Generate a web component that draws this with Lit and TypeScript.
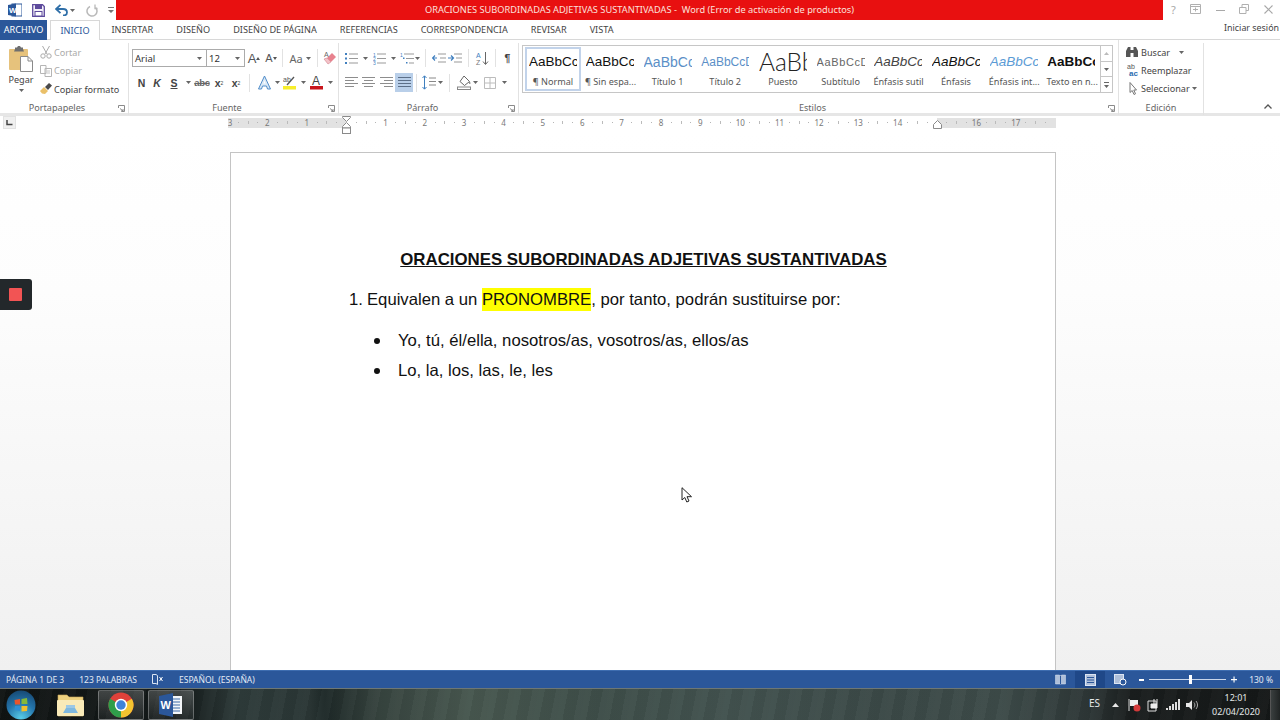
import { LitElement, html, svg, css } from "lit";
import { customElement } from "lit/decorators.js";

const caret = html`<svg class="caret" width="5" height="3" viewBox="0 0 5 3"><path d="M0 0h5L2.5 3z" fill="#666"/></svg>`;

// ribbon launcher in the corner of each group
const launcher = html`<svg class="launcher" width="7" height="7" viewBox="0 0 7 7"><path d="M.5 3V.5H6.5V6.5H3.5M2 3.5 5 6M5 4V6H3" fill="none" stroke="#8a8a8a"/></svg>`;

const lines = (rows: number[][], color = "#8d8d8d") =>
    svg`${rows.map(([x1, x2], i) => svg`<rect x=${x1} y=${1 + i * 3} width=${x2 - x1} height="1" fill=${color}/>`)}`;

const alignIcon = (rows: number[][], color?: string) =>
    html`<svg width="13" height="13" viewBox="0 0 13 13">${lines(rows, color)}</svg>`;

@customElement("title-bar")
export class TitleBar extends LitElement {
    static styles = css`
        :host {
            display: flex;
            height: 20px;
            background: #fff;
            font-family: "Noto Sans", sans-serif;
        }
        .qat {
            width: 116px;
            display: flex;
            align-items: center;
            padding: 0 0 0 8px;
            box-sizing: border-box;
        }
        .qat svg { flex: none; display: block; }
        .save { margin-left: 10px; }
        .undo { margin-left: 10px; }
        .undo-caret { margin: 0 0 0 2px; }
        .redo { margin-left: 11px; }
        .more { margin-left: 10px; }
        .title {
            flex: 1;
            background: #e81010;
            color: #fbe0dc;
            font-size: 9.25px;
            line-height: 20px;
            text-align: center;
            white-space: pre;
        }
        .win {
            width: 117px;
            display: flex;
            align-items: center;
            justify-content: space-between;
            padding: 0 7px 2px 8px;
            box-sizing: border-box;
            color: #a8a8a8;
            font-size: 11px;
        }
    `;

    render() {
        return html`
            <div class="qat">
                <svg width="14" height="14" viewBox="0 0 14 14">
                    <rect x="4" y="1" width="10" height="12" fill="#fff" stroke="#2b579a"/>
                    <path d="M0 2 8 .5V13.5L0 12z" fill="#2b579a"/>
                    <text x="1" y="10" font-size="8" font-weight="700" fill="#fff" font-family="Liberation Sans">W</text>
                </svg>
                <svg class="save" width="13" height="13" viewBox="0 0 13 13">
                    <path d="M.7.7H10.5L12.3 2.5V12.3H.7z" fill="#f2eff8" stroke="#5d4a9c" stroke-width="1.3"/>
                    <rect x="3" y="1" width="7" height="4" fill="#5d4a9c"/>
                    <rect x="3" y="7.5" width="7" height="4.5" fill="#fff" stroke="#5d4a9c"/>
                </svg>
                <svg class="undo" width="13" height="12" viewBox="0 0 13 12">
                    <path d="M2 5H8C10.5 5 12 6.500 12 8.500S10.500 11.500 8 11.500" fill="none" stroke="#2f6fa8" stroke-width="1.800"/>
                    <path d="M5.500 .8 1 5 5.500 9.200" fill="none" stroke="#2f6fa8" stroke-width="1.800"/>
                </svg>
                <svg class="undo-caret" width="5" height="3" viewBox="0 0 5 3"><path d="M0 0h5L2.500 3z" fill="#666"/></svg>
                <svg class="redo" width="12" height="13" viewBox="0 0 12 13">
                    <path d="M4 2.500A5 5 0 1 0 9.500 3.500" fill="none" stroke="#b9b9b9" stroke-width="1.500"/>
                    <path d="M9 .5V4.500H11.500" fill="none" stroke="#b9b9b9" stroke-width="1.300"/>
                </svg>
                <svg class="more" width="6" height="8" viewBox="0 0 6 8"><path d="M0 1h6v1H0zM0 4h6L3 7z" fill="#777"/></svg>
            </div>
            <div class="title">ORACIONES SUBORDINADAS ADJETIVAS SUSTANTIVADAS -  Word (Error de activación de productos)</div>
            <div class="win">
                <span>?</span>
                <svg width="11" height="10" viewBox="0 0 11 10"><path d="M.5.500h10v9H.5zM.5 2.500h10M3 5.500h5M5.500 3.500v4" fill="none" stroke="#b0b0b0"/></svg>
                <svg width="9" height="9" viewBox="0 0 9 9"><rect y="5" width="9" height="1" fill="#a8a8a8"/></svg>
                <svg width="10" height="10" viewBox="0 0 10 10"><path d="M.5 3.500h6.500v6H.5zM3 3V.5h6.500v6H7" fill="none" stroke="#b0b0b0"/></svg>
                <svg width="9" height="9" viewBox="0 0 9 9"><path d="M.5.500l8 8M8.500.500l-8 8" stroke="#a8a8a8" stroke-width="1.100"/></svg>
            </div>
        `;
    }
}

@customElement("ribbon-tabs")
export class RibbonTabs extends LitElement {
    static styles = css`
        :host {
            display: flex;
            height: 20px;
            box-sizing: border-box;
            border-bottom: 1px solid #d8d8d8;
            font-family: "Noto Sans", sans-serif;
            font-size: 9.15px;
            color: #444;
            background: #fff;
        }
        .file {
            width: 47px;
            background: #2b579a;
            color: #fff;
            line-height: 20px;
            height: 20px;
            text-align: center;
            margin-right: 3px;
        }
        .active {
            width: 50px;
            height: 20px;
            box-sizing: border-box;
            border: 1px solid #d8d8d8;
            border-bottom: none;
            background: #fff;
            color: #2b579a;
            text-align: center;
            line-height: 20px;
        }
        .tab {
            padding: 0 11.5px;
            line-height: 20px;
            white-space: nowrap;
        }
        .signin {
            margin-left: auto;
            line-height: 16px;
            padding-right: 1px;
            color: #444;
            white-space: nowrap;
            font-size: 8.9px;
        }
    `;

    render() {
        const tabs = ["INSERTAR", "DISEÑO", "DISEÑO DE PÁGINA", "REFERENCIAS", "CORRESPONDENCIA", "REVISAR", "VISTA"];
        return html`
            <div class="file">ARCHIVO</div>
            <div class="active">INICIO</div>
            ${tabs.map((t) => html`<div class="tab">${t}</div>`)}
            <div class="signin">Iniciar sesión</div>
        `;
    }
}

@customElement("word-ribbon")
export class WordRibbon extends LitElement {
    static styles = css`
        :host {
            display: flex;
            box-sizing: border-box;
            background: #fff;
            font-family: "Noto Sans", sans-serif;
            font-size: 9.1px;
            color: #555;
            border-bottom: 3px solid #e6e6e6;
            height: 76px;
            position: relative;
        }
        svg { display: block; flex: none; }
        .group {
            position: relative;
            box-sizing: border-box;
            display: flex;
            flex-direction: column;
            margin: 3px 0 -2px;
            border-right: 1px solid #e2e2e2;
        }
        .body { flex: 1; display: flex; min-height: 0; }
        .label {
            height: 14px;
            line-height: 14px;
            text-align: center;
            color: #666;
            font-size: 9.1px;
        }
        .launcher { position: absolute; right: 3px; bottom: 3px; }

        .clip { width: 129px; }
        .clip .label { padding-right: 14px; }
        .paste {
            width: 36px;
            margin-left: 3px;
            display: flex;
            flex-direction: column;
            align-items: center;
            padding-top: 3px;
        }
        .paste span { margin-top: 1px; line-height: 13px; color: #444; }
        .paste .caret { margin-top: 3px; }
        .clip-list { margin-left: 1px; padding-top: 0; display: flex; flex-direction: column; }
        .clip-item {
            height: 18.5px;
            display: flex;
            align-items: center;
            gap: 2px;
            color: #aaa;
            white-space: nowrap;
        }
        .clip-item svg { width: 12px; }
        .clip-item.on { color: #444; }

        .font { width: 210px; padding: 6px 0 0 3px; }
        .para { width: 180px; padding: 6px 0 0 4px; }
        .font .label, .para .label { padding-right: 16px; }
        .font .body, .para .body { flex-direction: column; gap: 6px; }
        .row { display: flex; align-items: center; height: 18px; flex: none; }
        .row.two { height: 19px; }
        .row svg { flex: none; }
        .c {
            display: flex;
            align-items: center;
            justify-content: center;
            height: 100%;
            flex: none;
            color: #444;
            font-family: "Liberation Sans", sans-serif;
        }
        .w2 { width: 2px; } .w5 { width: 5px; } .w8 { width: 8px; } .w9 { width: 9px; } .w11 { width: 11px; }
        .w13 { width: 13px; } .w14 { width: 14px; } .w15 { width: 15px; } .w16 { width: 16px; }
        .w18 { width: 18px; } .w24 { width: 24px; }
        .sep { width: 1px; height: 18px; background: #e2e2e2; flex: none; margin: 0 5px; }
        .sep.tight { margin-left: 3px; }
        .combo {
            display: flex;
            align-items: center;
            height: 18px;
            box-sizing: border-box;
            border: 1px solid #ababab;
            padding: 0 4px 0 2px;
            color: #333;
            font-size: 9.5px;
            justify-content: space-between;
            font-family: "Noto Sans", sans-serif;
        }
        .combo.fname { width: 75px; }
        .combo.size { width: 38px; border-left: none; }
        .bold { font-weight: 700; font-size: 10.500px; }
        .ital { font-style: italic; font-weight: 700; font-size: 10.500px; }
        .under { font-weight: 700; font-size: 10.500px; text-decoration: underline; }
        .strike { font-size: 9.500px; font-weight: 700; text-decoration: line-through; color: #666; letter-spacing: -0.3px; }
        .sub { font-weight: 700; font-size: 10.500px; }
        sub, sup { font-size: 5px; font-weight: 400; line-height: 0; }
        .grow { font-size: 13px; color: #555; }
        .shrink { font-size: 11px; color: #555; }
        .aa { font-family: "Noto Sans", sans-serif; font-size: 11px; color: #666; }
        .hl { background: #b9cfe9; height: 19px; }

        .styles { width: 600px; padding: 0 0 0 3px; margin-top: 0; }
        .gallery {
            margin-top: 5px;
            height: 48px;
            width: 591px;
            box-sizing: border-box;
            border: 1px solid #c6c6c6;
            display: flex;
            flex: none;
        }
        .styles .label { position: absolute; left: 0; right: 0; bottom: 0; padding-right: 12px; }
        .style {
            width: 57.700px;
            flex: none;
            box-sizing: border-box;
            padding: 4px 4px 0;
            text-align: center;
        }
        .style.sel { border: 2px solid #c2d3ea; padding: 1px 2px 0; width: 56px; margin: 1px 0 1px 2px; height: 44px; }
        .sample {
            height: 24px;
            line-height: 24px;
            overflow: hidden;
            white-space: nowrap;
            text-align: left;
            width: 48px;
            margin: 0 auto;
            font-family: "Liberation Sans", sans-serif;
            font-size: 13.500px;
            color: #111;
        }
        .name { font-size: 9.100px; color: #555; white-space: nowrap; line-height: 16px; }
        .t1 { color: #5b8fc7; font-size: 14px; }
        .t2 { color: #5b8fc7; font-size: 12px; }
        .puesto { font-family: Lato, "Liberation Sans", sans-serif; font-size: 24.500px; font-weight: 300; color: #222; }
        .subt { font-size: 11px; color: #666; letter-spacing: 0.6px; }
        .es { font-style: italic; color: #444; }
        .em { font-style: italic; color: #111; }
        .ei { font-style: italic; color: #5b9bd5; }
        .te { font-weight: 700; color: #111; }
        .scroll {
            margin-left: auto;
            width: 12px;
            border-left: 1px solid #c6c6c6;
            display: flex;
            flex-direction: column;
        }
        .scroll div {
            flex: 1;
            display: flex;
            align-items: center;
            justify-content: center;
            border-bottom: 1px solid #c6c6c6;
        }
        .scroll div:last-child { border-bottom: none; }

        .edit { width: 85px; }
        .edit .body { flex-direction: column; padding-left: 6px; }
        .edit-item {
            height: 18px;
            display: flex;
            align-items: center;
            gap: 2px;
            color: #444;
            white-space: nowrap;
        }
        .edit-item > svg:first-child { width: 14px; }
        .find .caret { margin-left: 7px; }
        .collapse { position: absolute; right: 8px; bottom: 4px; }
    `;

    render() {
        const styles = [
            ["AaBbCc", "¶ Normal", "", true],
            ["AaBbCc", "¶ Sin espa...", ""],
            ["AaBbCc", "Título 1", "t1"],
            ["AaBbCcD", "Título 2", "t2"],
            ["AaBbCc", "Puesto", "puesto"],
            ["AaBbCcD", "Subtítulo", "subt"],
            ["AaBbCc", "Énfasis sutil", "es"],
            ["AaBbCc", "Énfasis", "em"],
            ["AaBbCc", "Énfasis int...", "ei"],
            ["AaBbCc", "Texto en n...", "te"],
        ];
        return html`
            <div class="group clip">
                <div class="body">
                    <div class="paste">
                        <svg width="24" height="26" viewBox="0 0 24 26">
                            <rect x="0" y="3" width="19" height="21" rx="1" fill="#e6c27c"/>
                            <path d="M6 3V1.500H8L9 0H11L12 1.500H14V3L15 5.500H5z" fill="#6f6f6f"/>
                            <path d="M11.500 10.500H19L23.500 15V25.500H11.500z" fill="#fff" stroke="#8a8a8a"/>
                            <path d="M19 10.500V15H23.500" fill="none" stroke="#8a8a8a"/>
                        </svg>
                        <span>Pegar</span>
                        ${caret}
                    </div>
                    <div class="clip-list">
                        <div class="clip-item">
                            <svg height="13" viewBox="0 0 12 13"><path d="M2.500 0 7 8M9.500 0 5 8" stroke="#aaa" fill="none"/><circle cx="3" cy="10" r="2.200" fill="none" stroke="#aaa"/><circle cx="9" cy="10" r="2.200" fill="none" stroke="#aaa"/></svg>
                            <span>Cortar</span>
                        </div>
                        <div class="clip-item">
                            <svg height="12" viewBox="0 0 12 12"><path d="M.5.500H6V8.500H.5zM5 3.500H11.500V11.500H5z" fill="#fff" stroke="#b5b5b5"/><path d="M6.500 6h3.500M6.500 8h3.500" stroke="#c4c4c4"/></svg>
                            <span>Copiar</span>
                        </div>
                        <div class="clip-item on">
                            <svg height="12" viewBox="0 0 12 12"><path d="M0 8 4 4 8 8 5 11 2 10.500z" fill="#eac069"/><path d="M5 4 9 0 12 2.500 8 7z" fill="#4a4a4a"/></svg>
                            <span>Copiar formato</span>
                        </div>
                    </div>
                </div>
                <div class="label">Portapapeles</div>
                ${launcher}
            </div>

            <div class="group font">
                <div class="body">
                    <div class="row">
                        <div class="combo fname"><span>Arial</span>${caret}</div>
                        <div class="combo size"><span>12</span>${caret}</div>
                        <div class="c w18 grow">A<svg width="4" height="3" viewBox="0 0 4 3"><path d="M0 3 2 0 4 3z" fill="#555"/></svg></div>
                        <div class="c w16 shrink">A<svg width="4" height="3" viewBox="0 0 4 3"><path d="M0 0 2 3 4 0z" fill="#555"/></svg></div>
                        <div class="sep tight"></div>
                        <div class="c w24 aa">Aa&nbsp;${caret}</div>
                        <div class="sep"></div>
                        <svg width="14" height="14" viewBox="0 0 14 14">
                            <path d="M4 7 9 2 13 6 8 11z" fill="#e8828e"/>
                            <path d="M1 8 4 7 8 11 5 13z" fill="#f3c2c8" stroke="#c9707c" stroke-width=".5"/>
                            <text x="1" y="6" font-size="7" fill="#666" font-family="Liberation Sans">A</text>
                        </svg>
                    </div>
                    <div class="row two">
                        <div class="c w2"></div>
                        <div class="c w15 bold">N</div>
                        <div class="c w16 ital">K</div>
                        <div class="c w18 under">S</div>
                        <div class="c w11">${caret}</div>
                        <div class="c w16 strike">abc</div>
                        <div class="c w18 sub">x<sub>2</sub></div>
                        <div class="c w16 sub">x<sup>2</sup></div>
                        <div class="sep"></div>
                        <div class="c w18">
                            <svg width="15" height="15" viewBox="0 0 15 15"><path d="M7.500 1 13.500 14H10.500L9.500 11H5.500L4.500 14H1.500z" fill="#dbe9f6" stroke="#4f8cc9"/><path d="M6.500 8.500 7.500 5.500 8.500 8.500z" fill="#fff"/></svg>
                        </div>
                        <div class="c w8">${caret}</div>
                        <div class="c w18">
                            <svg width="14" height="15" viewBox="0 0 14 15"><text x="0" y="7" font-size="7" fill="#555" font-family="Liberation Sans">ab</text><path d="M4 10 11 2" stroke="#555" stroke-width="1.300"/><rect y="11" width="13" height="3.500" fill="#f7ee2c"/></svg>
                        </div>
                        <div class="c w9">${caret}</div>
                        <div class="c w18">
                            <svg width="14" height="15" viewBox="0 0 14 15"><text x="2" y="10" font-size="12" fill="#444" font-family="Liberation Sans">A</text><rect y="11" width="13" height="3.500" fill="#c8161d"/></svg>
                        </div>
                        <div class="c w9">${caret}</div>
                    </div>
                </div>
                <div class="label">Fuente</div>
                ${launcher}
            </div>

            <div class="group para">
                <div class="body">
                    <div class="row">
                        <div class="c w16">
                            <svg width="13" height="13" viewBox="0 0 13 13"><path d="M0 1h2v2H0zM0 5.500h2v2H0zM0 10h2v2H0z" fill="#3f7fbf"/><path d="M4 2h9M4 6.500h9M4 11h9" stroke="#999"/></svg>
                        </div>
                        <div class="c w13">${caret}</div>
                        <div class="c w15">
                            <svg width="13" height="13" viewBox="0 0 13 13"><text x="0" y="5" font-size="5" fill="#3f7fbf" font-family="Liberation Sans">1</text><text x="0" y="9" font-size="5" fill="#3f7fbf" font-family="Liberation Sans">2</text><text x="0" y="13" font-size="5" fill="#3f7fbf" font-family="Liberation Sans">3</text><path d="M4 2h9M4 6.500h9M4 11h9" stroke="#999"/></svg>
                        </div>
                        <div class="c w13">${caret}</div>
                        <div class="c w15">
                            <svg width="15" height="13" viewBox="0 0 15 13"><text x="0" y="5" font-size="5" fill="#3f7fbf" font-family="Liberation Sans">1</text><path d="M4 2h10M6 6.500h8M9 11h5" stroke="#999"/><rect x="3" y="5.500" width="1.500" height="1.500" fill="#3f7fbf"/><rect x="6" y="10" width="1.500" height="1.500" fill="#3f7fbf"/></svg>
                        </div>
                        <div class="c w5">${caret}</div>
                        <div class="sep"></div>
                        <div class="c w16">
                            <svg width="14" height="12" viewBox="0 0 14 12"><path d="M6 2h8M8 6h6M6 10h8" stroke="#999"/><path d="M5 6H.5M3 3.500.5 6 3 8.500" fill="none" stroke="#3f7fbf" stroke-width="1.200"/></svg>
                        </div>
                        <div class="c w16">
                            <svg width="14" height="12" viewBox="0 0 14 12"><path d="M6 2h8M8 6h6M6 10h8" stroke="#999"/><path d="M0 6H5M3 3.500 5.500 6 3 8.500" fill="none" stroke="#3f7fbf" stroke-width="1.200"/></svg>
                        </div>
                        <div class="sep"></div>
                        <div class="c w16">
                            <svg width="14" height="15" viewBox="0 0 14 15"><text x="1" y="7" font-size="7" fill="#3f7fbf" font-family="Liberation Sans">A</text><text x="1" y="14" font-size="7" fill="#777" font-family="Liberation Sans">Z</text><path d="M10.500 1V13M8 10.500 10.500 13.500 13 10.500" fill="none" stroke="#666"/></svg>
                        </div>
                        <div class="sep"></div>
                        <div class="c w13 bold">¶</div>
                    </div>
                    <div class="row two">
                        <div class="c w16">${alignIcon([[0, 13], [0, 9], [0, 13], [0, 9]])}</div>
                        <div class="c w18">${alignIcon([[0, 13], [2, 11], [0, 13], [2, 11]])}</div>
                        <div class="c w18">${alignIcon([[0, 13], [4, 13], [0, 13], [4, 13]])}</div>
                        <div class="c w18 hl">${alignIcon([[0, 13], [0, 13], [0, 13], [0, 13]], "#5c6f88")}</div>
                        <div class="sep tight"></div>
                        <div class="c w14">
                            <svg width="14" height="15" viewBox="0 0 14 15"><path d="M2.500 1V14M.5 3 2.500 .8 4.500 3M.5 12 2.500 14.200 4.500 12" fill="none" stroke="#3f7fbf"/><path d="M7 3h7M7 6.500h7M7 10h7" stroke="#888"/></svg>
                        </div>
                        <div class="c w8">${caret}</div>
                        <div class="sep"></div>
                        <div class="c w18">
                            <svg width="15" height="15" viewBox="0 0 15 15"><path d="M7 1 12.500 6.500 7.500 10.500 3 6.500z" fill="#fff" stroke="#666"/><path d="M12.500 6c1 1.500 1.500 2.500.5 3S11.500 7.500 12.500 6z" fill="#888"/><rect x=".5" y="12" width="13" height="2.500" fill="#fff" stroke="#888"/></svg>
                        </div>
                        <div class="c w5">${caret}</div>
                        <div class="c w24">
                            <svg width="12" height="12" viewBox="0 0 12 12"><path d="M.5.500h11v11H.5zM6 .500v11M.5 6h11" fill="none" stroke="#bcbcbc"/></svg>
                        </div>
                        <div class="c w5">${caret}</div>
                    </div>
                </div>
                <div class="label">Párrafo</div>
                ${launcher}
            </div>

            <div class="group styles">
                <div class="gallery">
                    ${styles.map(([s, n, cls, sel]) => html`
                        <div class="style ${sel ? "sel" : ""}">
                            <div class="sample ${cls}">${s}</div>
                            <div class="name">${n}</div>
                        </div>
                    `)}
                    <div class="scroll">
                        <div><svg width="5" height="3" viewBox="0 0 5 3"><path d="M0 3h5L2.500 0z" fill="#bbb"/></svg></div>
                        <div>${caret}</div>
                        <div><svg width="5" height="6" viewBox="0 0 5 6"><path d="M0 0h5v1H0zM0 3h5L2.500 6z" fill="#666"/></svg></div>
                    </div>
                </div>
                <div class="label">Estilos</div>
                ${launcher}
            </div>

            <div class="group edit">
                <div class="body">
                    <div class="edit-item find">
                        <svg height="12" viewBox="0 0 14 12"><path d="M1 5 3 1H5.500V4H8.500V1H11L13 5V11H8.500V7H5.500V11H1z" fill="#555"/></svg>
                        <span>Buscar</span>${caret}
                    </div>
                    <div class="edit-item">
                        <svg height="14" viewBox="0 0 14 14"><text x="2" y="6" font-size="7" fill="#555" font-family="Liberation Sans">ab</text><text x="4" y="13" font-size="8" font-weight="700" fill="#2b6cb0" font-family="Liberation Sans">ac</text></svg>
                        <span>Reemplazar</span>
                    </div>
                    <div class="edit-item">
                        <svg height="13" viewBox="0 0 14 13"><path d="M5 .5V10.500L7.200 8.500 9 12.500 10.500 11.800 8.800 8H11.500z" fill="#fff" stroke="#777"/></svg>
                        <span>Seleccionar</span>${caret}
                    </div>
                </div>
                <div class="label">Edición</div>
            </div>

            <svg class="collapse" width="8" height="5" viewBox="0 0 8 5"><path d="M.5 4.500 4 1 7.500 4.500" fill="none" stroke="#555" stroke-width="1.300"/></svg>
        `;
    }
}

@customElement("word-ruler")
export class WordRuler extends LitElement {
    static styles = css`
        :host {
            display: block;
            position: relative;
            height: 15px;
            background: #fff;
            font-family: "Noto Sans", sans-serif;
        }
        .corner {
            position: absolute;
            left: 3px;
            top: 0;
            width: 13px;
            height: 13px;
            background: #f0f0f0;
            border: 1px solid #e2e2e2;
            box-sizing: border-box;
            display: flex;
            align-items: center;
            justify-content: center;
        }
        .track {
            position: absolute;
            left: 228px;
            top: 2px;
            width: 828px;
            height: 10px;
            display: flex;
            background: linear-gradient(to right, #e2e2e2 118px, #fff 118px, #fff 709px, #e2e2e2 709px);
            overflow: hidden;
        }
        .cell {
            width: 39.360px;
            flex: none;
            display: flex;
            font-size: 8px;
            line-height: 10px;
            color: #777;
            background:
                linear-gradient(#b5b5b5, #b5b5b5) 9.800px 4px / 1px 1px no-repeat,
                linear-gradient(#bbb, #bbb) 19.600px 3px / 1px 3px no-repeat,
                linear-gradient(#b5b5b5, #b5b5b5) 29.400px 4px / 1px 1px no-repeat;
        }
        .cell span { width: 8px; margin-left: -4px; text-align: center; flex: none; }
        .cell.first span { margin-left: -2px; }
        .marker { position: absolute; display: block; }
        .left { left: 342px; top: 0; }
        .right { left: 933px; top: 4px; }
    `;

    render() {
        const nums = [3, 2, 1, 0, 1, 2, 3, 4, 5, 6, 7, 8, 9, 10, 11, 12, 13, 14, 15, 16, 17];
        return html`
            <div class="corner">
                <svg width="7" height="7" viewBox="0 0 7 7"><path d="M1 1V5.500H6.500" fill="none" stroke="#444" stroke-width="1.500"/></svg>
            </div>
            <div class="track">
                ${nums.map((n, i) => html`
                    <div class="cell ${i === 0 ? "first" : ""}">
                        <span>${n === 0 || n === 15 ? "" : n}</span>
                    </div>
                `)}
            </div>
            <svg class="marker left" width="9" height="18" viewBox="0 0 9 18">
                <path d="M.5.500H8.500V1.500L4.500 5.500.5 1.500zM4.500 6.500 8.500 10.500V12H.5V10.500z" fill="#fff" stroke="#8a8a8a"/>
                <rect x=".5" y="12" width="8" height="5.500" fill="#fff" stroke="#8a8a8a"/>
            </svg>
            <svg class="marker right" width="9" height="9" viewBox="0 0 9 9">
                <path d="M4.500.5 8.500 4.500V8.500H.5V4.500z" fill="#fff" stroke="#8a8a8a"/>
            </svg>
        `;
    }
}

@customElement("word-page")
export class WordPage extends LitElement {
    static styles = css`
        :host {
            display: block;
            flex: 1;
            min-height: 0;
            overflow: hidden;
            padding: 21px 0 0 230px;
            background: linear-gradient(#ffffff 0, #fdfdfd 30%, #f0f0f0 100%);
        }
        .page {
            box-sizing: border-box;
            width: 826px;
            height: 600px;
            background: #fff;
            border: 1px solid #c4c4c4;
            padding: 97px 116px 0 117px;
            font-family: "Liberation Sans", Arial, sans-serif;
            font-size: 16.680px;
            color: #111;
            line-height: 20px;
        }
        h1 {
            margin: 0;
            font-size: 16.830px;
            line-height: 20px;
            font-weight: 700;
            text-align: center;
            text-decoration: underline;
        }
        ul { margin: 21px 0 0; padding: 0; list-style: none; }
        .num { display: flex; margin: 20px 0 0 1px; }
        .num span { width: 18px; flex: none; }
        mark { background: #ffff00; color: inherit; padding: 2px 0; }
        li.b { display: flex; height: 20px; margin-bottom: 10px; }
        li.b i { width: 50px; flex: none; font-style: normal; display: flex; align-items: center; padding-left: 26px; box-sizing: border-box; }
        li.b i::before {
            content: "";
            width: 6px;
            height: 6px;
            border-radius: 50%;
            background: #111;
        }
    `;

    render() {
        return html`
            <div class="page">
                <h1>ORACIONES SUBORDINADAS ADJETIVAS SUSTANTIVADAS</h1>
                <div class="num"><span>1.</span><div>Equivalen a un <mark>PRONOMBRE</mark>, por tanto, podrán sustituirse por:</div></div>
                <ul>
                    <li class="b"><i></i>Yo, tú, él/ella, nosotros/as, vosotros/as, ellos/as</li>
                    <li class="b"><i></i>Lo, la, los, las, le, les</li>
                </ul>
            </div>
        `;
    }
}

@customElement("status-bar")
export class StatusBar extends LitElement {
    static styles = css`
        :host {
            display: flex;
            align-items: center;
            height: 18px;
            background: #2b579a;
            border-top: 1px solid #3e6db0;
            box-sizing: border-box;
            color: #e4ebf5;
            font-family: "Noto Sans", sans-serif;
            font-size: 8.5px;
            padding-left: 6px;
            white-space: nowrap;
        }
        svg { display: block; flex: none; }
        .words { margin-left: 15px; }
        .lang-ic { margin-left: 15px; }
        .lang { margin-left: 15px; }
        .views { margin-left: auto; display: flex; align-items: center; height: 17px; }
        .view { width: 30px; height: 17px; display: flex; align-items: center; justify-content: center; }
        .view.on { background: #1f4888; }
        .zoom { display: flex; align-items: center; margin-left: 4px; width: 98px; }
        .slider { position: relative; flex: 1; height: 1px; background: #c9d6ea; margin: 0 5px; }
        .thumb { position: absolute; left: 40px; top: -4px; width: 3px; height: 9px; background: #fff; }
        .pct { width: 43px; text-align: right; padding-right: 7px; box-sizing: border-box; }
    `;

    render() {
        return html`
            <span>PÁGINA 1 DE 3</span>
            <span class="words">123 PALABRAS</span>
            <svg class="lang-ic" width="12" height="11" viewBox="0 0 12 11"><path d="M.5.500H4L5.500 1.500V10.500L4 9.500H.5z" fill="none" stroke="#dbe5f3"/><path d="M7.500 3 10.500 7M10.500 3 7.500 7" stroke="#fff"/></svg>
            <span class="lang">ESPAÑOL (ESPAÑA)</span>
            <div class="views">
                <div class="view">
                    <svg width="11" height="11" viewBox="0 0 11 11"><path d="M.5 1H4.500L5.500 2 6.500 1H10.500V10H6.500L5.500 10.500 4.500 10H.5z" fill="#aebfd9" stroke="#dbe5f3" stroke-width=".5"/><path d="M5.500 2V10.500" stroke="#2b579a"/></svg>
                </div>
                <div class="view on">
                    <svg width="11" height="12" viewBox="0 0 11 12"><rect x=".5" y=".5" width="10" height="11" fill="#aebfd9" stroke="#dbe5f3"/><path d="M2 3.500h7M2 6h7M2 8.500h7" stroke="#2b579a"/></svg>
                </div>
                <div class="view">
                    <svg width="13" height="12" viewBox="0 0 13 12"><rect x=".5" y=".5" width="9" height="9" fill="#aebfd9" stroke="#dbe5f3"/><circle cx="9" cy="8" r="3" fill="#2b579a" stroke="#fff"/></svg>
                </div>
            </div>
            <div class="zoom">
                <svg width="5" height="2" viewBox="0 0 5 2"><rect width="5" height="2" fill="#fff"/></svg>
                <div class="slider"><div class="thumb"></div></div>
                <svg width="6" height="7" viewBox="0 0 7 7"><path d="M0 3h7v1.300H0zM2.900 0h1.300v7H2.900z" fill="#fff"/></svg>
            </div>
            <span class="pct">130 %</span>
        `;
    }
}

@customElement("win-taskbar")
export class WinTaskbar extends LitElement {
    static styles = css`
        :host {
            display: flex;
            align-items: center;
            height: 32px;
            box-sizing: border-box;
            border-top: 1px solid #6d7775;
            background:
                repeating-linear-gradient(101deg, rgba(255,255,255,.025) 0 6px, rgba(0,0,0,.035) 6px 17px, rgba(255,255,255,.02) 17px 23px),
                linear-gradient(90deg, #101413 0, #141a1a 180px, #2e3b3a 240px, #2a3635 310px, #1e2928 325px, #37443f 380px, #47574f 470px, #3e4e49 600px, #42524f 730px, #3b4947 880px, #3d4b49 1000px, #2d3636 1090px, #1a1e1e 1130px, #141717 1280px);
            color: #e4e8e8;
            font-family: "Noto Sans", sans-serif;
            font-size: 10px;
        }
        svg { display: block; flex: none; }
        .orb { margin-left: 6px; }
        .folder { margin-left: 20px; }
        .app {
            width: 46px;
            height: 30px;
            box-sizing: border-box;
            border: 1px solid rgba(255,255,255,.28);
            border-radius: 2px;
            background: linear-gradient(rgba(255,255,255,.2), rgba(255,255,255,.05));
            display: flex;
            align-items: center;
            justify-content: center;
        }
        .chrome { margin-left: 12px; }
        .word { margin-left: 4px; }
        .tray { margin-left: auto; display: flex; align-items: center; }
        .es { margin-right: 12px; margin-top: -4px; }
        .tray svg { margin-right: 6px; }
        .tray svg.arrow { margin-right: 9px; }
        .clock { width: 62px; text-align: center; line-height: 14px; font-size: 9px; }
        .desk { width: 10px; height: 30px; margin-left: 3px; background: linear-gradient(90deg, #3a3f3f, #202424); border-left: 1px solid #555; box-sizing: border-box; }
    `;

    render() {
        return html`
            <svg class="orb" width="30" height="30" viewBox="0 0 30 30">
                <defs>
                    <radialGradient id="orb" cx=".5" cy=".95" r=".95">
                        <stop offset="0" stop-color="#58cde8"/>
                        <stop offset=".55" stop-color="#2474aa"/>
                        <stop offset="1" stop-color="#174a75"/>
                    </radialGradient>
                </defs>
                <circle cx="15" cy="15" r="14.500" fill="url(#orb)"/>
                <path d="M8.500 10 14 9V14.500H9z" fill="#e8552c"/>
                <path d="M15.500 9 21 8 21.500 14H15.500z" fill="#85b83a"/>
                <path d="M9 16H14V21L8.500 20z" fill="#2f8fd6"/>
                <path d="M15.500 16H21.500L21 21 15.500 21.500z" fill="#f2bf2c"/>
            </svg>
            <svg class="folder" width="30" height="26" viewBox="0 0 30 26">
                <path d="M2 3H11L13 5H27V24H2z" fill="#edd17f" stroke="#c9a85a" stroke-width=".6"/>
                <rect x="1" y="8" width="27" height="16" rx="1" fill="#f9eab8"/>
                <rect x="10" y="13" width="9" height="3" fill="#9cc8e6"/>
                <path d="M7 21 10 16H19L22 21z" fill="#7fb8df"/>
            </svg>
            <div class="app chrome">
                <svg width="26" height="26" viewBox="0 0 26 26">
                    <circle cx="13" cy="13" r="12.500" fill="#e0413a"/>
                    <path d="M13 13 2.200 6.700A12.500 12.500 0 0 0 13 25.500z" fill="#2f9e4a"/>
                    <path d="M13 13 13 25.500A12.500 12.500 0 0 0 23.800 6.700z" fill="#f4c430"/>
                    <circle cx="13" cy="13" r="6.200" fill="#fff"/>
                    <circle cx="13" cy="13" r="4.700" fill="#3f82d8"/>
                </svg>
            </div>
            <div class="app word">
                <svg width="24" height="24" viewBox="0 0 24 24">
                    <rect x="11" y="3" width="12" height="18" fill="#f4f6f8"/>
                    <path d="M13 6h8M13 9h8M13 12h8M13 15h8M13 18h8" stroke="#3d6aa8"/>
                    <path d="M0 3 14 0V24L0 21z" fill="#2b579a"/>
                    <text x="1.500" y="16" font-size="11" font-weight="700" fill="#fff" font-family="Liberation Sans">W</text>
                </svg>
            </div>
            <div class="tray">
                <span class="es">ES</span>
                <svg class="arrow" width="7" height="4" viewBox="0 0 7 4"><path d="M0 4 3.500 0 7 4z" fill="#e8e8e8"/></svg>
                <svg width="13" height="14" viewBox="0 0 13 14"><path d="M1 1V13" stroke="#ddd"/><path d="M2 2H10V8H2z" fill="#eee"/><circle cx="9" cy="10" r="3.500" fill="#d23a3a"/></svg>
                <svg width="13" height="14" viewBox="0 0 13 14"><path d="M1 3H9V13H1z" fill="none" stroke="#ddd"/><path d="M4 6H10V10H4zM7 1V6M10 1V6" stroke="#eee" fill="#eee"/></svg>
                <svg width="14" height="11" viewBox="0 0 14 11"><path d="M0 9h2v2H0zM3 7h2v4H3zM6 5h2v6H6zM9 3h2v8H9zM12 0h2v11h-2z" fill="#ddd"/></svg>
                <svg width="13" height="12" viewBox="0 0 13 12"><path d="M0 4H3L6 1V11L3 8H0z" fill="#e8e8e8"/><path d="M8 3.500C9.200 5 9.200 7 8 8.500M10 2C12 4.500 12 7.500 10 10" fill="none" stroke="#aaa"/></svg>
                <div class="clock">12:01<br>02/04/2020</div>
                <div class="desk"></div>
            </div>
        `;
    }
}

@customElement("app-root")
export class AppRoot extends LitElement {
    static styles = css`
        :host {
            display: flex;
            flex-direction: column;
            position: relative;
            width: 1280px;
            height: 720px;
            overflow: hidden;
            background: #fff;
        }
        .rec {
            position: absolute;
            left: 0;
            top: 279px;
            width: 32px;
            height: 31px;
            background: #23282b;
            border-radius: 0 3px 3px 0;
            display: flex;
            align-items: center;
            justify-content: center;
            padding-right: 1px;
            box-sizing: border-box;
        }
        .rec div { width: 13px; height: 13px; background: #f25454; border-radius: 1px; }
        .cursor { position: absolute; left: 681px; top: 487px; }
    `;

    render() {
        return html`
            <title-bar></title-bar>
            <ribbon-tabs></ribbon-tabs>
            <word-ribbon></word-ribbon>
            <word-ruler></word-ruler>
            <word-page></word-page>
            <status-bar></status-bar>
            <win-taskbar></win-taskbar>
            <div class="rec"><div></div></div>
            <svg class="cursor" width="12" height="16" viewBox="0 0 12 16">
                <path d="M1 .7V13L3.800 10.500 5.800 15 8 14 6 9.700H10.500z" fill="#fff" stroke="#222"/>
            </svg>
        `;
    }
}
